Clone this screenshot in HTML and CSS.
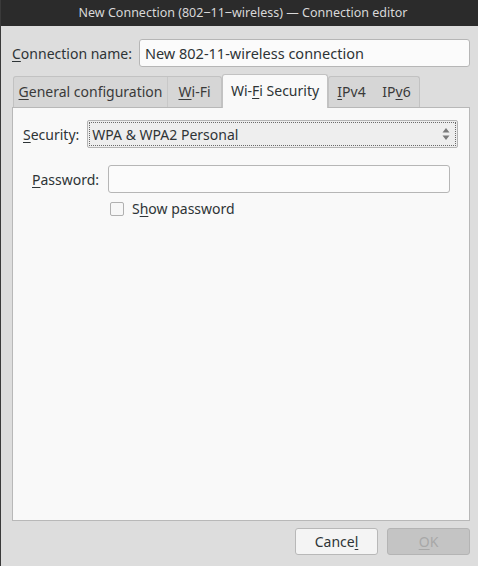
FILE: index.html
```html
<!DOCTYPE html>
<html>
<head>
<meta charset="utf-8">
<link rel="stylesheet" href="styles.css">
</head>
<body>
<div class="window">
  <div class="titlebar">New Connection (802‒11‒wireless) — Connection editor</div>
  <div class="content">
    <div class="name-row">
      <span class="label"><u>C</u>onnection name:</span>
      <div class="entry name-entry">New 802-11-wireless connection</div>
    </div>
    <div class="tabs">
      <div class="tab-group">
        <div class="tab sep t-general"><u>G</u>eneral configuration</div>
        <div class="tab t-wifi"><u>W</u>i-Fi</div>
      </div>
      <div class="tab active t-sec">Wi-<u>F</u>i Security</div>
      <div class="tab-group">
        <div class="tab t-ip"><u>I</u>Pv4</div>
        <div class="tab t-ip">IP<u>v</u>6</div>
      </div>
    </div>
    <div class="panel">
      <div class="sec-row">
        <span class="label"><u>S</u>ecurity:</span>
        <div class="combo">
          <span>WPA &amp; WPA2 Personal</span>
          <svg class="arrows" width="8" height="14" viewBox="0 0 8 14"><path d="M4 1 L7.5 5.5 L0.5 5.5 Z M4 13 L7.5 8.5 L0.5 8.5 Z" fill="#7a7a7a"/></svg>
        </div>
      </div>
      <div class="pw-row">
        <span class="label"><u>P</u>assword:</span>
        <div class="entry pw-entry"></div>
      </div>
      <div class="check-row">
        <span class="checkbox"></span>
        <span>S<u>h</u>ow password</span>
      </div>
    </div>
    <div class="buttons">
      <div class="btn">Cance<u>l</u></div>
      <div class="btn disabled"><u>O</u>K</div>
    </div>
  </div>
</div>
</body>
</html>
```
FILE: styles.css
```css
* { box-sizing: border-box; }
html, body { margin: 0; padding: 0; }
body {
  width: 478px;
  height: 566px;
  overflow: hidden;
  font-family: "Noto Sans", "Open Sans", sans-serif;
  font-size: 14px;
  color: #2e3436;
  background: #dcdcdc;
}
u { text-decoration: underline; text-underline-offset: 2px; text-decoration-thickness: 1px; }
.window {
  width: 478px;
  height: 566px;
  border-left: 1px solid #3a3a3a;
  background: #dddddd;
  display: flex;
  flex-direction: column;
}
.titlebar {
  height: 26px;
  background: #2b2b2b;
  color: #d8d8d8;
  font-size: 12.5px;
  text-align: center;
  line-height: 26px;
  padding-left: 7px;
}
.content {
  padding: 13px 8px 0 11px;
  display: flex;
  flex-direction: column;
}
.name-row {
  display: flex;
  align-items: center;
  gap: 7px;
}
.label { color: #2e3436; white-space: nowrap; }
.entry {
  background: #fbfbfb;
  border: 1px solid #b6b6b6;
  border-radius: 3px;
  height: 28px;
  line-height: 26px;
  padding: 0 5px;
  color: #2e3436;
}
.name-entry { flex: 1; font-size: 14.5px; }
.tabs {
  margin-top: 7px;
  padding-left: 1px;
  display: flex;
  align-items: flex-end;
  height: 33px;
}
.tab-group {
  display: flex;
  background: #d6d6d6;
  border: 1px solid #c2c2c2;
  border-bottom: none;
  border-radius: 3px 3px 0 0;
  height: 31px;
}
.tab {
  height: 30px;
  line-height: 30px;
  text-align: center;
  color: #3a3a3a;
  white-space: nowrap;
}
.t-general { width: 154px; }
.t-wifi { width: 53px; }
.t-sec { width: 106px; }
.t-ip { width: 45px; }
.tab.sep { border-right: 1px solid #c8c8c8; }
.tab.active {
  background: #f9f9f9;
  height: 34px;
  line-height: 32px;
  border: 1px solid #c2c2c2;
  border-bottom: none;
  border-radius: 3px 3px 0 0;
  position: relative;
  top: 1px;
  color: #2e3436;
}
.panel {
  background: #f9f9f9;
  border: 1px solid #b8b8b8;
  height: 414px;
  padding: 12px 11px 0 10px;
}
.sec-row {
  display: flex;
  align-items: center;
  gap: 8px;
}
.combo {
  flex: 1;
  height: 28px;
  background: #eeeeee;
  border: 1px solid #b4b4b4;
  border-radius: 2px;
  outline: 1px dotted #6a6a6a;
  outline-offset: -3px;
  display: flex;
  align-items: center;
  justify-content: space-between;
  padding: 0 7px 0 4px;
}
.arrows { display: block; }
.pw-row {
  display: flex;
  align-items: center;
  gap: 9px;
  margin-top: 17px;
  padding-left: 9px;
  padding-right: 8px;
}
.pw-entry { flex: 1; }
.check-row {
  display: flex;
  align-items: center;
  gap: 8px;
  margin-top: 6px;
  padding-left: 87px;
}
.checkbox {
  width: 14px;
  height: 14px;
  border: 1px solid #b0b0b0;
  border-radius: 2px;
  background: #f7f7f7;
}
.buttons {
  display: flex;
  justify-content: flex-end;
  gap: 9px;
  margin-top: 7px;
}
.btn {
  width: 83px;
  height: 27px;
  border: 1px solid #b8b8b8;
  border-radius: 3px;
  background: #f4f4f4;
  text-align: center;
  line-height: 25px;
  color: #2e3436;
}
.btn.disabled {
  background: #c4c4c4;
  border-color: #b4b4b4;
  color: #a8a8a8;
}
```
